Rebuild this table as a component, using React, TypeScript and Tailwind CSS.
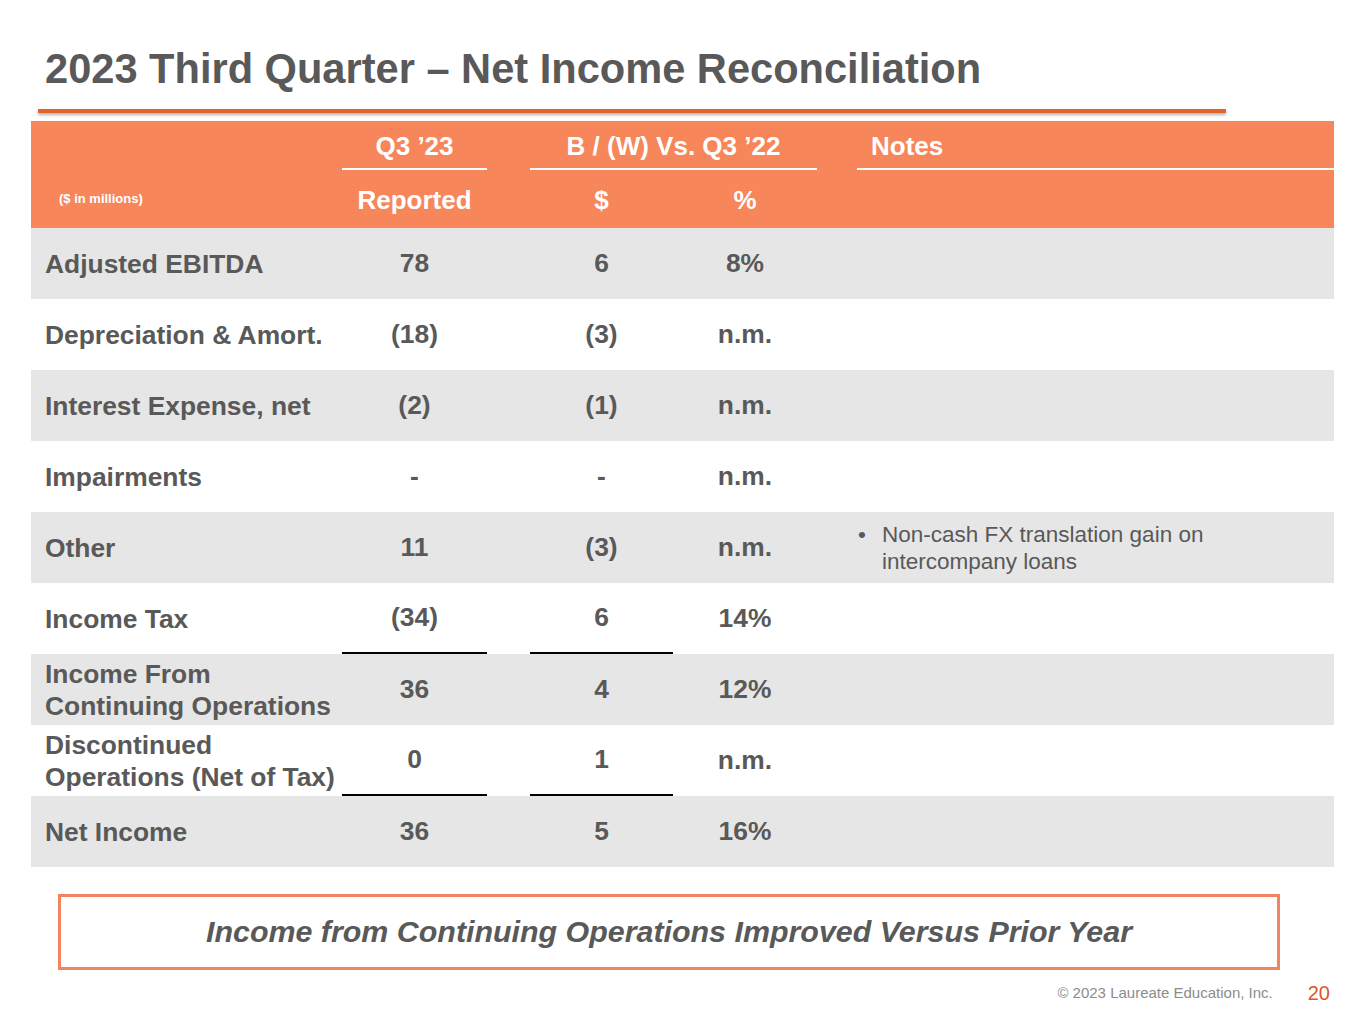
const rows = [
  { label: ["Adjusted EBITDA"], rep: "78", d: "6", p: "8%", shade: true },
  { label: ["Depreciation & Amort."], rep: "(18)", d: "(3)", p: "n.m.", shade: false },
  { label: ["Interest Expense, net"], rep: "(2)", d: "(1)", p: "n.m.", shade: true },
  { label: ["Impairments"], rep: "-", d: "-", p: "n.m.", shade: false },
  {
    label: ["Other"],
    rep: "11",
    d: "(3)",
    p: "n.m.",
    shade: true,
    note: ["Non-cash FX translation gain on", "intercompany loans"],
  },
  { label: ["Income Tax"], rep: "(34)", d: "6", p: "14%", shade: false, rule: true },
  { label: ["Income From", "Continuing Operations"], rep: "36", d: "4", p: "12%", shade: true },
  { label: ["Discontinued", "Operations (Net of Tax)"], rep: "0", d: "1", p: "n.m.", shade: false, rule: true },
  { label: ["Net Income"], rep: "36", d: "5", p: "16%", shade: true },
];

const cols = "grid grid-cols-[311px_145px_43px_143px_144px_40px_477px]";

export default function App() {
  return (
    <div className="w-[1365px] h-[1024px] bg-white font-['Liberation_Sans',Arial,sans-serif] text-[#595959] flex flex-col">
      <h1 className="pl-[45px] pt-[44px] text-[41.6px] leading-[50px] font-bold">
        2023 Third Quarter – Net Income Reconciliation
      </h1>
      <div className="ml-[38px] mt-[15px] w-[1188px] h-[4px] bg-[#e0652f] shadow-[0_2px_3px_rgba(0,0,0,0.3)]" />

      <div className="ml-[31px] mt-[8px] w-[1303px]">
        {/* header */}
        <div className={`${cols} bg-[#f7865b] text-white font-bold text-[26px]`}>
          <div className="h-[49px]" />
          <div className="h-[49px] flex items-center justify-center pt-[3px] border-b-2 border-white">Q3 ’23</div>
          <div className="h-[49px]" />
          <div className="col-span-2 h-[49px] flex items-center justify-center pt-[3px] border-b-2 border-white">
            B / (W) Vs. Q3 ’22
          </div>
          <div className="h-[49px]" />
          <div className="h-[49px] flex items-center pl-[14px] pt-[3px] border-b-2 border-white">Notes</div>

          <div className="h-[58px] flex items-center pl-[28px] text-[13px]">($ in millions)</div>
          <div className="h-[58px] flex items-center justify-center pt-[2px]">Reported</div>
          <div />
          <div className="h-[58px] flex items-center justify-center pt-[2px]">$</div>
          <div className="h-[58px] flex items-center justify-center pt-[2px]">%</div>
          <div />
          <div />
        </div>

        {/* body */}
        {rows.map((r, i) => (
          <div
            key={i}
            className={`${cols} h-[71px] font-bold text-[26.4px] ${r.shade ? "bg-[#e6e6e6]" : "bg-white"}`}
          >
            <div className="flex flex-col justify-center pl-[14px] leading-[32px]">
              {r.label.map((l) => (
                <span key={l}>{l}</span>
              ))}
            </div>
            <div className={`flex items-center justify-center ${r.rule ? "border-b-2 border-black" : ""}`}>{r.rep}</div>
            <div />
            <div className={`flex items-center justify-center ${r.rule ? "border-b-2 border-black" : ""}`}>{r.d}</div>
            <div className="flex items-center justify-center">{r.p}</div>
            <div />
            <div className="flex items-center">
              {r.note && (
                <div className="flex font-normal text-[22.5px] leading-[27px]">
                  <span className="w-[25px] pl-[1px]">•</span>
                  <div>
                    {r.note.map((n) => (
                      <div key={n}>{n}</div>
                    ))}
                  </div>
                </div>
              )}
            </div>
          </div>
        ))}
      </div>

      <div className="ml-[58px] mt-[27px] w-[1222px] h-[76px] border-[3px] border-[#f4845f] flex items-center justify-center">
        <span className="text-[30.4px] font-bold italic">Income from Continuing Operations Improved Versus Prior Year</span>
      </div>

      <div className="flex items-center justify-end mt-[8px] pr-[35px]">
        <span className="text-[15px] text-[#8c8c8c]">© 2023 Laureate Education, Inc.</span>
        <span className="ml-[35px] text-[20px] text-[#e0552c]">20</span>
      </div>
    </div>
  );
}
